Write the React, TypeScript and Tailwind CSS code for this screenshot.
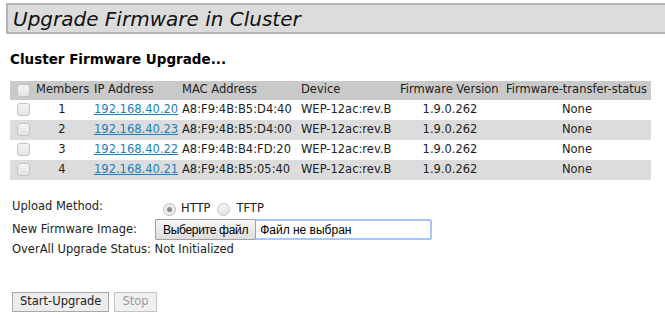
import React from "react";

const font = { fontFamily: '"DejaVu Sans", Verdana, sans-serif' };

function Box() {
  return <span className="inline-block w-[13px] h-[13px] rounded-[3px] border border-[#c4c4c4] bg-gradient-to-b from-[#f4f4f4] to-[#e4e4e4] align-middle" />;
}

const rows = [
  ["1", "192.168.40.20", "A8:F9:4B:B5:D4:40"],
  ["2", "192.168.40.23", "A8:F9:4B:B5:D4:00"],
  ["3", "192.168.40.22", "A8:F9:4B:B4:FD:20"],
  ["4", "192.168.40.21", "A8:F9:4B:B5:05:40"],
];

export default function App() {
  return (
    <div className="w-[665px] h-[318px] bg-white text-[#222] text-[11.5px] overflow-hidden" style={font}>
      <div className="pt-[3px] pl-[6px]">
        <div className="h-[31px] border-y-2 border-l-2 border-[#b4b4bc] bg-[#dcdcdc] pl-[5px] flex items-center">
          <span className="italic text-[20px] text-[#111] leading-none">Upgrade Firmware in Cluster</span>
        </div>
      </div>
      <div className="pl-[10px] pt-[19px] font-bold text-[13.5px] text-black leading-none">Cluster Firmware Upgrade...</div>
      <table className="ml-[10px] mt-[14px] border-collapse table-fixed w-[641px]">
        <colgroup>
          <col className="w-[23px]" />
          <col className="w-[58px]" />
          <col className="w-[88px]" />
          <col className="w-[119px]" />
          <col className="w-[99px]" />
          <col className="w-[106px]" />
          <col className="w-[148px]" />
        </colgroup>
        <thead>
          <tr className="bg-[#c9c9c9] h-[19px] text-left">
            <th className="font-normal pl-[7px] pt-px"><Box /></th>
            <th className="font-normal pl-[3px] whitespace-nowrap">Members</th>
            <th className="font-normal pl-[3px] whitespace-nowrap">IP Address</th>
            <th className="font-normal pl-[3px] whitespace-nowrap">MAC Address</th>
            <th className="font-normal pl-[3px] whitespace-nowrap">Device</th>
            <th className="font-normal pl-[3px] whitespace-nowrap">Firmware Version</th>
            <th className="font-normal pl-[3px] whitespace-nowrap">Firmware-transfer-status</th>
          </tr>
        </thead>
        <tbody>
          {rows.map((r, i) => (
            <tr key={i} className={(i % 2 ? "bg-[#dcdcdc]" : "bg-white") + " h-[20px]"}>
              <td className="pl-[7px]"><Box /></td>
              <td className="text-center">{r[0]}</td>
              <td className="pl-[3px]"><a className="text-[#1a7fc1] underline whitespace-nowrap">{r[1]}</a></td>
              <td className="pl-[3px] whitespace-nowrap">{r[2]}</td>
              <td className="pl-[3px] whitespace-nowrap">WEP-12ac:rev.B</td>
              <td className="text-center">1.9.0.262</td>
              <td className="text-center">None</td>
            </tr>
          ))}
        </tbody>
      </table>
      <div className="pl-[12px] pt-[17px] flex flex-col">
        <div className="flex items-center h-[20px]">
          <span className="w-[148px]">Upload Method:</span>
          <span className="ml-[3px] mt-[5px] inline-flex items-center">
            <span className="w-[13px] h-[13px] rounded-full border border-[#bdbdbd] bg-[#ececec] flex items-center justify-center">
              <span className="w-[5px] h-[5px] rounded-full bg-[#8a8a8a]" />
            </span>
            <span className="ml-[5px]">HTTP</span>
            <span className="ml-[7px] w-[13px] h-[13px] rounded-full border border-[#c4c4c4] bg-gradient-to-b from-[#f4f4f4] to-[#e2e2e2]" />
            <span className="ml-[6px]">TFTP</span>
          </span>
        </div>
        <div className="flex items-center h-[22px] mt-[2px]">
          <span className="w-[143px]">New Firmware Image:</span>
          <div className="w-[277px] h-[21px] border-2 border-[#a8c6f6] rounded-[2px] flex items-center">
            <span className="h-[21px] -ml-[2px] -my-[2px] px-[7px] border border-[#a0a0a0] rounded-[2px] bg-gradient-to-b from-[#f6f6f6] to-[#dddddd] flex items-center text-black tracking-[-0.3px]" style={{ fontFamily: '"Liberation Sans", Arial, sans-serif', fontSize: "12px" }}>Выберите файл</span>
            <span className="ml-[4px] text-[12px] text-black" style={{ fontFamily: '"Liberation Sans", Arial, sans-serif' }}>Файл не выбран</span>
          </div>
        </div>
        <div className="h-[18px] flex items-center">OverAll Upgrade Status: Not Initialized</div>
        <div className="flex gap-[5px] mt-[33px]">
          <button className="h-[20px] px-[7px] border border-[#a8a8a8] bg-[#ececec] text-[#222] leading-none">Start-Upgrade</button>
          <button className="h-[20px] px-[7px] border border-[#c4c4c4] bg-[#f0f0f0] text-[#9a9a9a] leading-none">Stop</button>
        </div>
      </div>
    </div>
  );
}
